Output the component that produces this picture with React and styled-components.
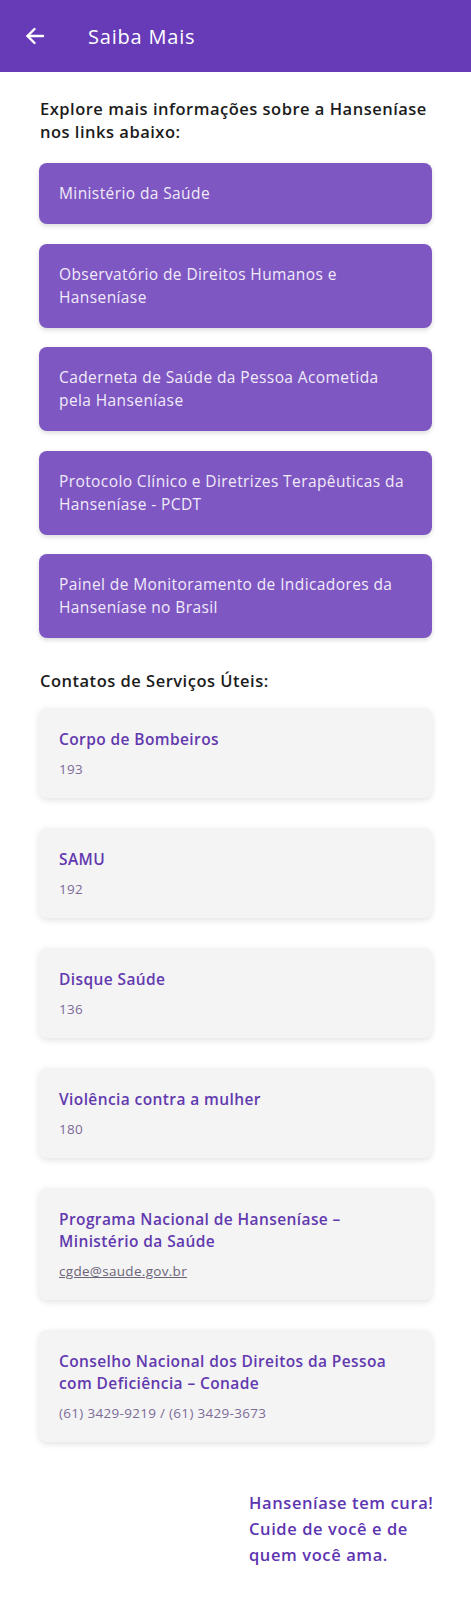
import styled, { createGlobalStyle } from "styled-components";

const GlobalStyle = createGlobalStyle`
  body {
    margin: 0;
    background: #ffffff;
    font-family: "Open Sans", "Noto Sans", sans-serif;
  }
`;

const Page = styled.div`
  width: 471px;
  min-height: 1600px;
  background: #ffffff;
`;

const Header = styled.header`
  display: flex;
  align-items: center;
  height: 72px;
  padding: 0 0 0 25px;
  background: #673ab7;
  color: #ffffff;
`;

const BackButton = styled.button`
  display: flex;
  align-items: center;
  justify-content: center;
  width: 20px;
  height: 20px;
  margin: 0 43px 0 0;
  padding: 0;
  border: none;
  background: transparent;
  color: #ffffff;
  cursor: pointer;
`;

const Title = styled.h1`
  margin: 0;
  font-size: 20px;
  font-weight: 400;
  letter-spacing: 0.8px;
`;

const Content = styled.main`
  display: flex;
  flex-direction: column;
  padding: 25px 39px 40px 39px;
`;

const SectionTitle = styled.h2`
  margin: ${({ $top }) => $top || "0"} -22px ${({ $bottom }) => $bottom || "22px"} 1px;
  font-size: 16.5px;
  font-weight: 600;
  line-height: 23px;
  color: #1c1c1c;
  letter-spacing: 0.5px;
`;

const LinkList = styled.div`
  display: flex;
  flex-direction: column;
  gap: 19.5px;
`;

const LinkCard = styled.a`
  display: flex;
  align-items: center;
  padding: 19px 20px;
  min-height: 23px;
  border-radius: 8px;
  background: #7e57c2;
  color: #f1ebfa;
  font-size: 15.5px;
  line-height: 23px;
  letter-spacing: 0.4px;
  text-decoration: none;
  box-shadow: 0 2px 5px rgba(0, 0, 0, 0.15);
`;

const ContactList = styled.div`
  display: flex;
  flex-direction: column;
  gap: 30px;
`;

const ContactCard = styled.div`
  display: flex;
  flex-direction: column;
  gap: 10px;
  padding: 20px 40px 20px 20px;
  border-radius: 8px;
  background: #f4f4f5;
  box-shadow: 0 2px 6px rgba(0, 0, 0, 0.12);
`;

const ContactName = styled.div`
  font-size: 15.5px;
  font-weight: 600;
  line-height: 22px;
  color: #6239ae;
  letter-spacing: 0.4px;
`;

const ContactInfo = styled.div`
  font-size: 13.5px;
  line-height: 18px;
  letter-spacing: 0.3px;
  color: ${({ $link }) => ($link ? "#6b6478" : "#7c6b98")};
  text-decoration: ${({ $link }) => ($link ? "underline" : "none")};
`;

const Footer = styled.p`
  align-self: flex-end;
  width: 205px;
  margin: 48px -22px 0 0;
  font-size: 16.5px;
  font-weight: 600;
  line-height: 26px;
  color: #5e35b1;
  letter-spacing: 0.6px;
`;

const links = [
  "Ministério da Saúde",
  "Observatório de Direitos Humanos e Hanseníase",
  "Caderneta de Saúde da Pessoa Acometida pela Hanseníase",
  "Protocolo Clínico e Diretrizes Terapêuticas da Hanseníase - PCDT",
  "Painel de Monitoramento de Indicadores da Hanseníase no Brasil",
];

const contacts = [
  { name: "Corpo de Bombeiros", info: "193" },
  { name: "SAMU", info: "192" },
  { name: "Disque Saúde", info: "136" },
  { name: "Violência contra a mulher", info: "180" },
  { name: "Programa Nacional de Hanseníase – Ministério da Saúde", info: "cgde@saude.gov.br", link: true },
  { name: "Conselho Nacional dos Direitos da Pessoa com Deficiência – Conade", info: "(61) 3429-9219 / (61) 3429-3673" },
];

export default function App() {
  return (
    <Page>
      <GlobalStyle />
      <Header>
        <BackButton aria-label="Voltar">
          <svg width="20" height="20" viewBox="0 0 20 20" fill="none" stroke="currentColor" strokeWidth="2.4" strokeLinecap="round" strokeLinejoin="round">
            <path d="M18 10H2.5" />
            <path d="M9.5 3L2.5 10l7 7" />
          </svg>
        </BackButton>
        <Title>Saiba Mais</Title>
      </Header>
      <Content>
        <SectionTitle $bottom="20px">Explore mais informações sobre a Hanseníase nos links abaixo:</SectionTitle>
        <LinkList>
          {links.map((text) => (
            <LinkCard key={text} href="#">
              {text}
            </LinkCard>
          ))}
        </LinkList>
        <SectionTitle $top="31px" $bottom="16px">Contatos de Serviços Úteis:</SectionTitle>
        <ContactList>
          {contacts.map((c) => (
            <ContactCard key={c.name}>
              <ContactName>{c.name}</ContactName>
              <ContactInfo $link={c.link}>{c.info}</ContactInfo>
            </ContactCard>
          ))}
        </ContactList>
        <Footer>
          Hanseníase tem cura!
          <br />
          Cuide de você e de
          <br />
          quem você ama.
        </Footer>
      </Content>
    </Page>
  );
}
